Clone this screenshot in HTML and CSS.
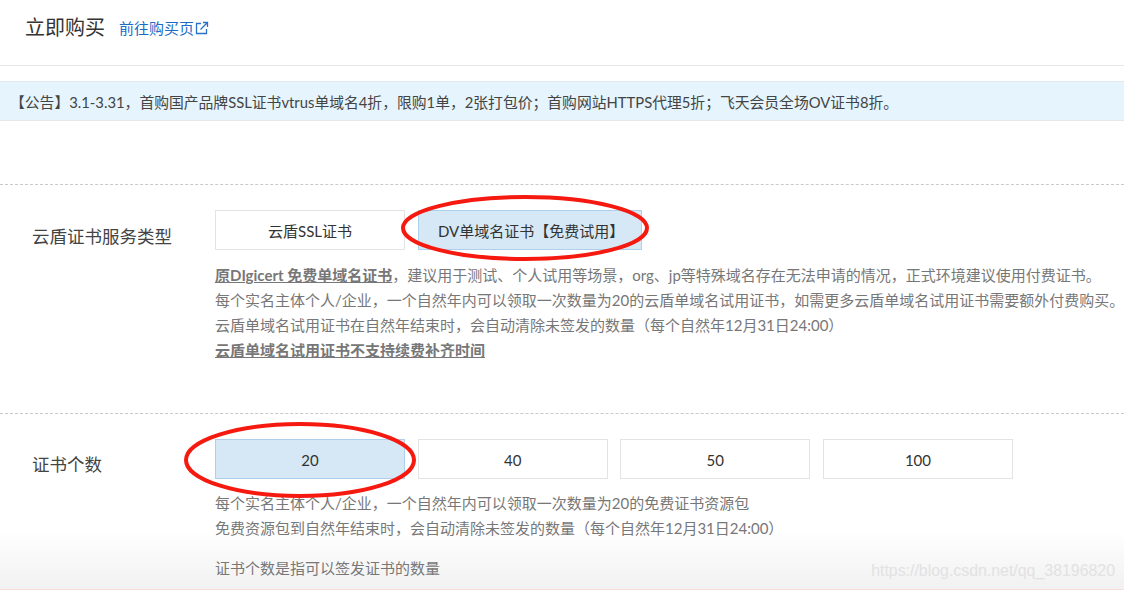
FILE: index.html
```html
<!DOCTYPE html>
<html lang="zh-CN">
<head>
<meta charset="utf-8">
<title>立即购买</title>
<link rel="stylesheet" href="styles.css">
</head>
<body>
<div class="page">
  <div class="fade"></div>
  <header class="head">
    <h1 class="title">立即购买</h1>
    <a class="link">前往购买页<svg class="ext" width="14" height="14" viewBox="0 0 14 14"><path d="M11.500 8V12.500H1.500V2.500H6" fill="none" stroke="#2a72c8" stroke-width="1.300"/><path d="M5.500 8.500L12 2M8 1.500H12.500V6" fill="none" stroke="#2a72c8" stroke-width="1.300"/></svg></a>
  </header>
  <div class="notice">【公告】3.1-3.31，首购国产品牌SSL证书vtrus单域名4折，限购1单，2张打包价；首购网站HTTPS代理5折；飞天会员全场OV证书8折。</div>
  <section class="row row-type">
    <div class="label">云盾证书服务类型</div>
    <div class="body">
      <div class="opts">
        <div class="opt">云盾SSL证书</div>
        <div class="opt on opt-wide">DV单域名证书【免费试用】</div>
      </div>
      <div class="desc">
        <p><b>原DIgicert 免费单域名证书</b>，建议用于测试、个人试用等场景，org、jp等特殊域名存在无法申请的情况，正式环境建议使用付费证书。</p>
        <p>每个实名主体个人/企业，一个自然年内可以领取一次数量为20的云盾单域名试用证书，如需更多云盾单域名试用证书需要额外付费购买。</p>
        <p>云盾单域名试用证书在自然年结束时，会自动清除未签发的数量（每个自然年12月31日24:00）</p>
        <p><b>云盾单域名试用证书不支持续费补齐时间</b></p>
      </div>
    </div>
  </section>
  <section class="row row-count">
    <div class="label">证书个数</div>
    <div class="body">
      <div class="opts">
        <div class="opt on">20</div>
        <div class="opt">40</div>
        <div class="opt">50</div>
        <div class="opt">100</div>
      </div>
      <div class="desc">
        <p>每个实名主体个人/企业，一个自然年内可以领取一次数量为20的免费证书资源包</p>
        <p>免费资源包到自然年结束时，会自动清除未签发的数量（每个自然年12月31日24:00）</p>
        <p class="gap">证书个数是指可以签发证书的数量</p>
      </div>
    </div>
  </section>
  <div class="mark">https://blog.csdn.net/qq_38196820</div>
  <svg class="ring ring-a" width="250" height="70" viewBox="0 0 250 70"><ellipse cx="125" cy="35" rx="122" ry="31" fill="none" stroke="#f5190f" stroke-width="4"/></svg>
  <svg class="ring ring-b" width="236" height="80" viewBox="0 0 236 80"><ellipse cx="116" cy="40" rx="114" ry="36" fill="none" stroke="#f5190f" stroke-width="4"/></svg>
</div>
</body>
</html>
```
FILE: styles.css
```css
* { box-sizing: border-box; }
html, body { margin: 0; padding: 0; }
body {
  font-family: Lato, "Noto Sans CJK SC", sans-serif;
  background: #fff;
  overflow: hidden;
}
.page { position: relative; width: 1124px; height: 590px; overflow: hidden; }
.head {
  position: relative;
  height: 66px;
  border-bottom: 1px solid #e8e8e8;
  padding: 14px 0 0 25px;
  display: flex;
  align-items: flex-start;
}
.title { margin: 0; font-size: 20px; font-weight: 400; line-height: 27px; color: #333; }
.link { margin: 1px 0 0 14px; font-size: 15px; line-height: 26px; color: #1c6cc4; display: flex; align-items: center; }
.ext { margin-left: 1px; }
.notice {
  position: relative;
  margin-top: 15px;
  height: 40px;
  background: #e5f4fd;
  border-top: 1px solid #e0e8ec;
  border-bottom: 1px solid #e4e8ea;
  padding-left: 10px;
  font-size: 14.800px;
  line-height: 40px;
  color: #444;
  white-space: nowrap;
}
.row { position: relative; display: flex; border-top: 1px dashed #c9c9c9; }
.row-type { margin-top: 63px; height: 229px; padding-top: 25px; }
.row-count { height: 177px; padding-top: 25px; }
.label { width: 215px; padding: 14px 0 0 32px; font-size: 17.500px; line-height: 26px; color: #444; flex: none; }
.row-count .label { padding-top: 13px; }
.body { flex: 1; min-width: 0; }
.opts { display: flex; gap: 12.670px; }
.opt {
  width: 190px;
  height: 40px;
  border: 1px solid #e3e3e3;
  font-size: 15px;
  line-height: 40px;
  text-align: center;
  color: #333;
  background: #fff;
  white-space: nowrap;
}
.opt.on { background: #d6e8f5; border-color: #aed0ec; }
.opt-wide { width: 224px; padding-left: 3px; }
.desc { margin-top: 13px; font-size: 15px; line-height: 25px; color: #777; white-space: nowrap; }
.row-count .desc { margin-top: 12px; }
.desc p { margin: 0; }
.desc b { text-decoration: underline; font-weight: 700; color: #777; }
.desc .gap { margin-top: 15px; }
.fade {
  position: absolute;
  left: 0;
  right: 0;
  bottom: 0;
  height: 60px;
  background: linear-gradient(#fff, #f1f1f1);
  border-bottom: 1px solid #f8dcd8;
}
.mark {
  position: absolute;
  right: 9px;
  top: 560px;
  font-family: "Liberation Sans", sans-serif;
  font-size: 15.900px;
  line-height: 22px;
  color: #e2e2e2;
}
.ring { position: absolute; }
.ring-a { left: 400px; top: 193px; }
.ring-b { left: 184px; top: 420px; }
```
